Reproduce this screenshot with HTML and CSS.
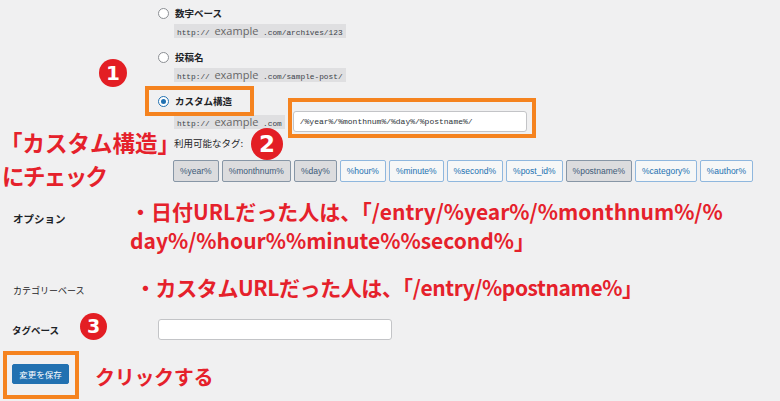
FILE: index.html
```html
<!DOCTYPE html>
<html lang="ja">
<head>
<meta charset="utf-8">
<title>パーマリンク設定</title>
<link rel="stylesheet" href="styles.css">
</head>
<body>
<div class="page">
  <div class="annot-left">「カスタム構造」<br><span class="tight">にチェック</span></div>
  <span class="badge b1">1</span>
  <span class="badge b2">2</span>
  <span class="badge b3">3</span>

  <section class="structure">
    <div class="opt">
      <label class="radio-label"><span class="radio"></span>数字ベース</label>
      <code class="url">http:// <span class="ex">example</span> .com/archives/123</code>
    </div>
    <div class="opt">
      <label class="radio-label"><span class="radio"></span>投稿名</label>
      <code class="url">http:// <span class="ex">example</span> .com/sample-post/</code>
    </div>
    <div class="opt">
      <label class="radio-label boxed box-label"><span class="radio checked"></span>カスタム構造</label>
      <div class="custom-row">
        <code class="url">http:// <span class="ex">example</span> .com</code>
        <div class="boxed box-input">
          <input class="text-input custom-input" type="text" value="/%year%/%monthnum%/%day%/%postname%/">
        </div>
      </div>
      <div class="tags-label">利用可能なタグ:</div>
      <div class="tags">
        <span class="tag active">%year%</span>
        <span class="tag active">%monthnum%</span>
        <span class="tag active">%day%</span>
        <span class="tag">%hour%</span>
        <span class="tag">%minute%</span>
        <span class="tag">%second%</span>
        <span class="tag">%post_id%</span>
        <span class="tag active">%postname%</span>
        <span class="tag">%category%</span>
        <span class="tag">%author%</span>
      </div>
    </div>
  </section>

  <section class="settings">
    <div class="row row-option">
      <div class="row-label heading">オプション</div>
      <div class="note note-date">・日付URLだった人は、「/entry/%year%/%monthnum%/%<br>day%/%hour%%minute%%second%」</div>
    </div>
    <div class="row row-category">
      <div class="row-label light">カテゴリーベース</div>
      <div class="note note-custom">・カスタムURLだった人は、「/entry/%postname%」</div>
    </div>
    <div class="row row-tag">
      <div class="row-label heading">タグベース</div>
      <input class="text-input tag-input" type="text">
    </div>
    <div class="row row-submit">
      <div class="boxed box-button"><button class="save" type="button">変更を保存</button></div>
      <div class="note note-click">クリックする</div>
    </div>
  </section>
</div>
</body>
</html>
```
FILE: styles.css
```css
* { box-sizing: border-box; }
html, body { margin: 0; padding: 0; }
body {
  background: #f0f0f1;
  font-family: "Noto Sans CJK JP", "Noto Sans", sans-serif;
  color: #1d2327;
  width: 780px;
  height: 401px;
  overflow: hidden;
}
.page { position: relative; height: 401px; }

/* annotations */
.annot-left {
  position: absolute;
  left: 0;
  top: 126px;
  font-size: 22.5px;
  line-height: 33px;
  font-weight: 700;
  color: #e5212b;
  white-space: nowrap;
}
.annot-left .tight { margin-left: 2px; letter-spacing: -1.6px; }
.badge {
  position: absolute;
  width: 28px;
  height: 28px;
  border-radius: 50%;
  background: #e31e24;
  color: #fff;
  font-family: "DejaVu Sans", sans-serif;
  font-weight: 700;
  font-size: 20px;
  line-height: 28px;
  text-align: center;
}
.b1 { left: 99px; top: 59px; }
.b2 { left: 251px; top: 128px; width: 32px; height: 32px; line-height: 32px; font-size: 23px; }
.b3 { left: 80px; top: 313px; width: 27px; height: 27px; line-height: 27px; font-size: 19px; }

.boxed { position: relative; }
.boxed::after {
  content: "";
  position: absolute;
  border: 4px solid #f5831f;
  pointer-events: none;
}

/* permalink structure */
.structure { padding: 6px 0 0 158px; }
.opt {
  display: flex;
  flex-direction: column;
  align-items: flex-start;
  margin-bottom: 12px;
}
.radio-label {
  display: inline-flex;
  align-items: center;
  height: 14px;
  font-size: 9.5px;
  font-weight: 700;
  line-height: 14px;
}
.radio {
  width: 11px;
  height: 11px;
  border: 1px solid #8c8f94;
  border-radius: 50%;
  background: #fff;
  margin-right: 6px;
  position: relative;
}
.radio.checked { border-color: #2271b1; }
.radio.checked::before {
  content: "";
  position: absolute;
  left: 2px; top: 2px;
  width: 5px; height: 5px;
  border-radius: 50%;
  background: #2271b1;
}
.url {
  display: inline-block;
  margin: 4px 0 0 16px;
  height: 14px;
  line-height: 14px;
  padding: 0 3px;
  background: #dfdfe1;
  font-family: "Liberation Mono", monospace;
  font-size: 7.8px;
  color: #3c434a;
  white-space: pre;
}
.ex {
  font-family: "Open Sans", "Liberation Sans", sans-serif;
  font-size: 11px;
  color: #666;
}
.box-label::after { left: -13px; right: -22px; top: -8px; bottom: -8px; }

.custom-row {
  display: flex;
  align-items: center;
  margin-top: 3px;
}
.custom-row .url { margin-top: 0; }
.box-input { margin-left: 8px; }
.box-input::after { left: -5px; right: -9px; top: -13px; bottom: -6px; }
.text-input {
  display: block;
  height: 21px;
  border: 1px solid #c3c4c7;
  border-radius: 3px;
  background: #fff;
  font-family: "Liberation Mono", monospace;
  font-size: 8px;
  color: #2c3338;
  padding: 0 6px;
  outline: none;
}
.custom-input { width: 234px; }

.tags-label {
  margin: 4px 0 0 16px;
  font-size: 9.5px;
  line-height: 14px;
}
.tags {
  display: flex;
  gap: 3px;
  margin: 10px 0 0 15px;
}
.tag {
  height: 22px;
  line-height: 20px;
  padding: 0 6px;
  border: 1px solid #8fb7de;
  border-radius: 2px;
  background: #f6f7f7;
  color: #2271b1;
  font-family: "Liberation Sans", sans-serif;
  font-size: 8.5px;
}
.tag.active {
  background: #dcdcde;
  border-color: #8796a6;
  color: #3c5a78;
}

/* settings rows */
.settings { margin-top: 19px; }
.row { display: flex; }
.row-label {
  width: 130px;
  padding-left: 13px;
  font-size: 10.5px;
  line-height: 14px;
  flex: none;
}
.heading { font-weight: 700; }
.light { font-size: 9px; }
.note {
  color: #e5212b;
  font-weight: 700;
  font-size: 21px;
  white-space: nowrap;
}
.row-option .row-label { margin-top: 11px; }
.note-date { line-height: 29px; margin-top: -4px; }
.row-category { margin-top: 19px; }
.row-category .row-label { margin-top: 10px; }
.note-custom { line-height: 26px; margin-left: 5px; letter-spacing: -0.4px; }
.row-tag { margin-top: 19px; align-items: center; }
.row-tag .row-label { width: 158px; padding-left: 12px; font-size: 9.5px; }
.tag-input { width: 234px; height: 21px; }

.row-submit { margin-top: 24px; align-items: flex-start; }
.box-button { margin-left: 12px; }
.box-button::after { left: -9px; right: -10px; top: -13px; bottom: -15px; }
.save {
  display: block;
  width: 57px;
  height: 20px;
  border: 1px solid #2271b1;
  border-radius: 2px;
  background: #2271b1;
  color: #fff;
  font-family: "Noto Sans CJK JP", sans-serif;
  font-size: 8.5px;
  padding: 0;
}
.note-click { margin-left: 26px; line-height: 26px; font-size: 20px; letter-spacing: -0.3px; }
```
